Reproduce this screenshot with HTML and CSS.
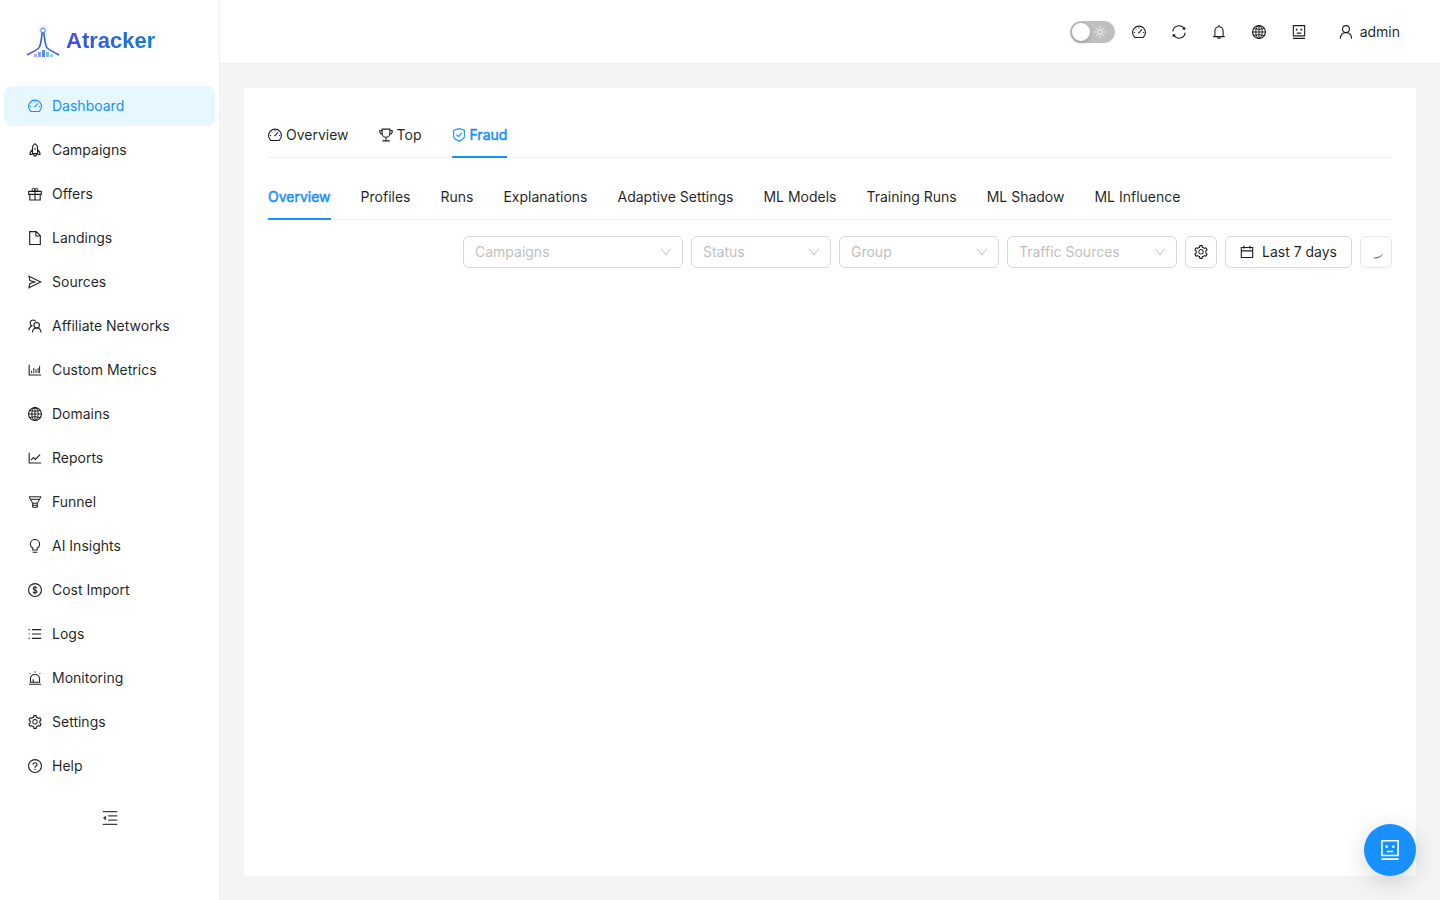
FILE: index.html
```html
<!DOCTYPE html>
<html lang="en">
<head>
    <meta charset="UTF-8">
    <meta name="viewport" content="width=device-width, initial-scale=1.0">
    <title>Atracker</title>
    <link rel="stylesheet" href="styles.css">
</head>
<body>
    <!-- Icon sprite -->
    <svg class="sprite" aria-hidden="true">
        <symbol id="i-dashboard" viewBox="64 64 896 896">
            <path d="M236 850A412 412 0 1 1 788 850Q776 860 760 860H264Q248 860 236 850Z"/>
            <path d="M512 210v80M275 305l50 50M180 545h80M764 545h80" stroke-width="60"/>
            <path d="M705 350L555 505"/>
            <circle cx="512" cy="548" r="36" stroke-width="56"/>
        </symbol>
        <symbol id="i-rocket" viewBox="64 64 896 896">
            <path d="M350 740V330Q370 180 512 105Q654 180 674 330V740Z"/>
            <path d="M350 520Q190 600 190 800H350M674 520Q834 600 834 800H674M410 740Q410 870 512 915Q614 870 614 740"/>
            <circle cx="512" cy="440" r="36" stroke-width="50"/>
        </symbol>
        <symbol id="i-gift" viewBox="64 64 896 896">
            <path d="M110 346H914V538H110ZM180 538V896H844V538M512 346V896"/>
            <path d="M512 340H400A95 95 0 1 1 512 235ZM512 340H624A95 95 0 1 0 512 235Z" stroke-width="64"/>
        </symbol>
        <symbol id="i-file" viewBox="64 64 896 896">
            <path d="M172 100H590L852 362V924H172ZM570 110V382H842"/>
        </symbol>
        <symbol id="i-send" viewBox="64 64 896 896">
            <path d="M125 150L885 512L125 874L185 600L490 512L185 424Z"/>
        </symbol>
        <symbol id="i-team" viewBox="64 64 896 896">
            <circle cx="620" cy="465" r="175"/>
            <path d="M350 930Q360 640 620 640Q880 640 900 930M120 790Q125 590 305 510Q195 450 205 290Q240 135 400 130Q520 130 565 225"/>
        </symbol>
        <symbol id="i-bars" viewBox="64 64 896 896">
            <path d="M140 170V835H900"/>
            <path d="M292 714V560M432 714V380M572 714V450M712 714V380M805 714V240" stroke-width="60"/>
        </symbol>
        <symbol id="i-globe" viewBox="64 64 896 896">
            <circle cx="512" cy="512" r="412"/>
            <ellipse cx="512" cy="512" rx="205" ry="412" stroke-width="60"/>
            <path d="M512 100V924M100 512H924M175 290Q512 390 849 290M175 734Q512 634 849 734" stroke-width="60"/>
        </symbol>
        <symbol id="i-line" viewBox="64 64 896 896">
            <path d="M140 170V835H900M260 650L410 480L535 600L835 300"/>
        </symbol>
        <symbol id="i-funnel" viewBox="64 64 896 896">
            <path d="M130 180H894L660 590V850H364V590ZM220 340H804M350 590H674M364 720H660" stroke-width="64"/>
        </symbol>
        <symbol id="i-bulb" viewBox="64 64 896 896">
            <path d="M370 770V640Q215 550 215 395A297 297 0 0 1 809 395Q809 550 654 640V770ZM360 915H664"/>
        </symbol>
        <symbol id="i-dollar" viewBox="64 64 896 896">
            <circle cx="512" cy="512" r="412"/>
            <path d="M635 405Q610 320 512 320Q395 320 395 410Q395 485 512 507Q635 530 635 615Q635 710 512 710Q400 710 385 615M512 250V780" stroke-width="66"/>
        </symbol>
        <symbol id="i-list" viewBox="64 64 896 896">
            <path d="M320 230H912M320 512H912M320 794H912M104 230H176M104 512H176M104 794H176"/>
        </symbol>
        <symbol id="i-alert" viewBox="64 64 896 896">
            <path d="M220 780V560A292 272 0 0 1 804 560V780ZM130 915H894M400 780V590"/>
            <path d="M512 80V175M165 190L230 255M859 190L794 255" stroke-width="60"/>
        </symbol>
        <symbol id="i-setting" viewBox="64 64 896 896">
            <path class="solid" d="M924.8 625.7l-65.5-56c3.1-19 4.7-38.4 4.7-57.8s-1.6-38.8-4.7-57.8l65.5-56a32.03 32.03 0 009.3-35.2l-.9-2.6a443.74 443.74 0 00-79.7-137.9l-1.8-2.1a32.12 32.12 0 00-35.1-9.5l-81.3 28.9c-30-24.6-63.5-44-99.7-57.6l-15.7-85a32.05 32.05 0 00-25.8-25.7l-2.7-.5c-52.1-9.4-106.9-9.4-159 0l-2.7.5a32.05 32.05 0 00-25.8 25.7l-15.8 85.4a351.86 351.86 0 00-99 57.4l-81.9-29.1a32 32 0 00-35.1 9.5l-1.8 2.1a446.02 446.02 0 00-79.7 137.9l-.9 2.6c-4.5 12.5-.8 26.5 9.3 35.2l66.3 56.6c-3.1 18.8-4.6 38-4.6 57.1 0 19.2 1.5 38.4 4.6 57.1L99 625.5a32.03 32.03 0 00-9.3 35.2l.9 2.6c18.1 50.4 44.9 96.9 79.7 137.9l1.8 2.1a32.12 32.12 0 0035.1 9.5l81.9-29.1c29.8 24.5 63.1 43.9 99 57.4l15.8 85.4a32.05 32.05 0 0025.8 25.7l2.7.5a449.4 449.4 0 00159 0l2.7-.5a32.05 32.05 0 0025.8-25.7l15.7-85a350 350 0 0099.7-57.6l81.3 28.9a32 32 0 0035.1-9.5l1.8-2.1c34.8-41.1 61.6-87.5 79.7-137.9l.9-2.6c4.5-12.3.8-26.3-9.3-35zM788.3 465.9c2.5 15.1 3.8 30.6 3.8 46.1s-1.3 31-3.8 46.1l-6.6 40.1 74.7 63.9a370.03 370.03 0 01-42.6 73.6L721 702.8l-31.4 25.8c-23.9 19.6-50.5 35-79.3 45.8l-38.1 14.3-17.9 97a377.5 377.5 0 01-85 0l-17.9-97.2-37.8-14.5c-28.5-10.8-55-26.2-78.7-45.7l-31.4-25.9-93.4 33.2c-17-22.9-31.2-47.6-42.6-73.6l75.5-64.5-6.5-40c-2.4-14.9-3.7-30.3-3.7-45.5 0-15.3 1.2-30.6 3.7-45.5l6.5-40-75.5-64.5c11.3-26.1 25.6-50.7 42.6-73.6l93.4 33.2 31.4-25.9c23.7-19.5 50.2-34.9 78.7-45.7l37.9-14.3 17.9-97.2c28.1-3.2 56.8-3.2 85 0l17.9 97 38.1 14.3c28.7 10.8 55.4 26.2 79.3 45.8l31.4 25.8 92.8-32.9c17 22.9 31.2 47.6 42.6 73.6L781.8 426l6.5 39.9zM512 326c-97.2 0-176 78.8-176 176s78.8 176 176 176 176-78.8 176-176-78.8-176-176-176zm79.2 255.2A111.6 111.6 0 01512 614c-29.9 0-58-11.7-79.2-32.8A111.6 111.6 0 01400 502c0-29.9 11.7-58 32.8-79.2C454 401.6 482.1 390 512 390c29.9 0 58 11.6 79.2 32.8A111.6 111.6 0 01624 502c0 29.9-11.7 58-32.8 79.2z"/>
        </symbol>
        <symbol id="i-help" viewBox="64 64 896 896">
            <circle cx="512" cy="512" r="412"/>
            <path d="M384 425Q384 300 512 300Q640 300 640 415Q640 490 570 520Q512 545 512 620M512 690V765"/>
        </symbol>
        <symbol id="i-fold" viewBox="64 64 896 896">
            <path d="M104 160H920M408 390H920M408 634H920M104 864H920"/>
            <path class="solid" d="M115 512L292 375V649Z"/>
        </symbol>
        <symbol id="i-sync" viewBox="64 64 896 896">
            <path d="M115 470A395 395 0 0 1 840 300M909 554A395 395 0 0 1 184 724"/>
            <path class="solid" d="M910 170V380L710 340ZM114 854V644L314 684Z"/>
        </symbol>
        <symbol id="i-bell" viewBox="64 64 896 896">
            <path d="M250 800V440A262 262 0 0 1 774 440V800M140 805H884M512 70V170M415 860Q440 915 512 915Q584 915 609 860"/>
        </symbol>
        <symbol id="i-robot" viewBox="64 64 896 896">
            <path d="M150 100H874V760H150ZM130 920H894M372 580H652"/>
            <path class="solid" d="M310 310H414V414H310ZM610 310H714V414H610Z"/>
        </symbol>
        <symbol id="i-user" viewBox="64 64 896 896">
            <circle cx="512" cy="325" r="220"/>
            <path d="M150 935Q170 550 512 545Q854 550 874 935"/>
        </symbol>
        <symbol id="i-sun" viewBox="64 64 896 896">
            <circle cx="512" cy="512" r="190"/>
            <path d="M512 80V190M512 834V944M80 512H190M834 512H944M207 207L284 284M740 740L817 817M207 817L284 740M740 284L817 207"/>
        </symbol>
        <symbol id="i-trophy" viewBox="64 64 896 896">
            <path d="M265 135H759V410A247 247 0 0 1 265 410ZM265 220H115V330Q130 450 280 475M759 220H909V330Q894 450 744 475M512 660V875M270 885H754"/>
        </symbol>
        <symbol id="i-shield" viewBox="64 64 896 896">
            <path d="M512 105L854 200V610Q854 690 780 750L512 915L244 750Q170 690 170 610V200Z"/>
            <path d="M345 490L475 620L690 370"/>
        </symbol>
        <symbol id="i-calendar" viewBox="64 64 896 896">
            <path d="M148 220H876V860H148ZM148 440H876M320 110V300M704 110V300"/>
        </symbol>
        <symbol id="i-down" viewBox="64 64 896 896">
            <path d="M160 270L512 750L864 270"/>
        </symbol>
        <symbol id="i-spin" viewBox="64 64 896 896">
            <path class="solid" d="M960 570Q900 690 780 770Q600 890 360 850Q350 900 390 910Q620 970 810 820Q950 700 960 570Z"/>
        </symbol>
    </svg>

    <div class="layout">
        <aside class="sidebar">
            <a class="logo" href="#">
                <svg class="logo-mark" viewBox="0 0 34 34" aria-hidden="true">
                    <defs>
                        <linearGradient id="mark" x1="0" y1="0" x2="1" y2="0">
                            <stop offset="0" stop-color="#5b3fe8"/>
                            <stop offset=".5" stop-color="#2563eb"/>
                            <stop offset="1" stop-color="#3550d8"/>
                        </linearGradient>
                        <radialGradient id="glow">
                            <stop offset="0" stop-color="#6b7cf0" stop-opacity=".3"/>
                            <stop offset="1" stop-color="#6b7cf0" stop-opacity="0"/>
                        </radialGradient>
                    </defs>
                    <circle cx="17" cy="6" r="6" fill="url(#glow)"/>
                    <path d="M1 31C6 28 12 26 13.500 23C15 19 15.500 14 16.200 8.500M33 31C28 28 22 26 20.500 23C19 19 18.500 14 17.800 8.500" fill="none" stroke="url(#mark)" stroke-width="1.600"/>
                    <circle cx="17" cy="6.500" r="2.300" fill="#fff" stroke="#4a80e0" stroke-width="1"/>
                    <path d="M8 30h3v3H8z" fill="#b5a8f5"/>
                    <path d="M12 28h3v5h-3z" fill="#8b9cf2"/>
                    <path d="M16 26h3v7h-3z" fill="#5b86e8"/>
                    <path d="M20 28h3v5h-3z" fill="#7bbcd8"/>
                    <path d="M24 30h3v3h-3z" fill="#93d6da"/>
                </svg>
                <span class="logo-text">Atracker</span>
            </a>

            <nav class="menu">
                <a class="menu-item active" href="#"><svg class="icon"><use href="#i-dashboard"/></svg>Dashboard</a>
                <a class="menu-item" href="#"><svg class="icon"><use href="#i-rocket"/></svg>Campaigns</a>
                <a class="menu-item" href="#"><svg class="icon"><use href="#i-gift"/></svg>Offers</a>
                <a class="menu-item" href="#"><svg class="icon"><use href="#i-file"/></svg>Landings</a>
                <a class="menu-item" href="#"><svg class="icon"><use href="#i-send"/></svg>Sources</a>
                <a class="menu-item" href="#"><svg class="icon"><use href="#i-team"/></svg>Affiliate Networks</a>
                <a class="menu-item" href="#"><svg class="icon"><use href="#i-bars"/></svg>Custom Metrics</a>
                <a class="menu-item" href="#"><svg class="icon"><use href="#i-globe"/></svg>Domains</a>
                <a class="menu-item" href="#"><svg class="icon"><use href="#i-line"/></svg>Reports</a>
                <a class="menu-item" href="#"><svg class="icon"><use href="#i-funnel"/></svg>Funnel</a>
                <a class="menu-item" href="#"><svg class="icon"><use href="#i-bulb"/></svg>AI Insights</a>
                <a class="menu-item" href="#"><svg class="icon"><use href="#i-dollar"/></svg>Cost Import</a>
                <a class="menu-item" href="#"><svg class="icon"><use href="#i-list"/></svg>Logs</a>
                <a class="menu-item" href="#"><svg class="icon"><use href="#i-alert"/></svg>Monitoring</a>
                <a class="menu-item" href="#"><svg class="icon"><use href="#i-setting"/></svg>Settings</a>
                <a class="menu-item" href="#"><svg class="icon"><use href="#i-help"/></svg>Help</a>
            </nav>

            <button class="icon-btn collapse" aria-label="Collapse menu"><svg class="icon"><use href="#i-fold"/></svg></button>
        </aside>

        <div class="main">
            <header class="header">
                <label class="switch">
                    <input type="checkbox" aria-label="Dark theme">
                    <svg class="icon"><use href="#i-sun"/></svg>
                </label>
                <button class="icon-btn" aria-label="Dashboard"><svg class="icon"><use href="#i-dashboard"/></svg></button>
                <button class="icon-btn" aria-label="Refresh"><svg class="icon"><use href="#i-sync"/></svg></button>
                <button class="icon-btn" aria-label="Notifications"><svg class="icon"><use href="#i-bell"/></svg></button>
                <button class="icon-btn" aria-label="Language"><svg class="icon"><use href="#i-globe"/></svg></button>
                <button class="icon-btn" aria-label="Assistant"><svg class="icon"><use href="#i-robot"/></svg></button>
                <button class="user-btn"><svg class="icon"><use href="#i-user"/></svg>admin</button>
            </header>

            <main class="card">
                <div class="tabs" role="tablist">
                    <button class="tab" role="tab"><svg class="icon"><use href="#i-dashboard"/></svg>Overview</button>
                    <button class="tab" role="tab"><svg class="icon"><use href="#i-trophy"/></svg>Top</button>
                    <button class="tab active" role="tab" aria-selected="true"><svg class="icon"><use href="#i-shield"/></svg>Fraud</button>
                </div>

                <div class="tabs" role="tablist">
                    <button class="tab active" role="tab" aria-selected="true">Overview</button>
                    <button class="tab" role="tab">Profiles</button>
                    <button class="tab" role="tab">Runs</button>
                    <button class="tab" role="tab">Explanations</button>
                    <button class="tab" role="tab">Adaptive Settings</button>
                    <button class="tab" role="tab">ML Models</button>
                    <button class="tab" role="tab">Training Runs</button>
                    <button class="tab" role="tab">ML Shadow</button>
                    <button class="tab" role="tab">ML Influence</button>
                </div>

                <!-- Filters -->
                <div class="filters">
                    <div class="select campaigns">
                        <select aria-label="Campaigns"><option>Campaigns</option></select>
                        <svg class="icon"><use href="#i-down"/></svg>
                    </div>
                    <div class="select status">
                        <select aria-label="Status"><option>Status</option></select>
                        <svg class="icon"><use href="#i-down"/></svg>
                    </div>
                    <div class="select group">
                        <select aria-label="Group"><option>Group</option></select>
                        <svg class="icon"><use href="#i-down"/></svg>
                    </div>
                    <div class="select sources">
                        <select aria-label="Traffic Sources"><option>Traffic Sources</option></select>
                        <svg class="icon"><use href="#i-down"/></svg>
                    </div>
                    <button class="btn square" aria-label="Filter settings"><svg class="icon"><use href="#i-setting"/></svg></button>
                    <button class="btn"><svg class="icon"><use href="#i-calendar"/></svg>Last 7 days</button>
                    <button class="btn square loading" aria-label="Loading"><svg class="icon"><use href="#i-spin"/></svg></button>
                </div>
            </main>
        </div>
    </div>

    <button class="fab" aria-label="Open assistant"><svg class="icon"><use href="#i-robot"/></svg></button>
</body>
</html>
```
FILE: styles.css
```css
:root {
    --primary: #1890ff;
    --primary-bg: #e6f7ff;
    --text: rgba(0, 0, 0, 0.88);
    --placeholder: #bfbfbf;
    --border: #d9d9d9;
    --split: #f0f0f0;
    --page-bg: #f4f4f4;
}

* {
    box-sizing: border-box;
}

body {
    margin: 0;
    font-family: Inter, sans-serif;
    font-size: 14px;
    line-height: 22px;
    color: var(--text);
    background: var(--page-bg);
}

a {
    color: inherit;
    text-decoration: none;
}

button,
select {
    font: inherit;
    color: inherit;
    cursor: pointer;
}

button {
    display: flex;
    align-items: center;
    justify-content: center;
    padding: 0;
    border: none;
    background: none;
}

.sprite {
    display: none;
}

.icon {
    width: 14px;
    height: 14px;
    flex-shrink: 0;
    fill: none;
    stroke: currentColor;
    stroke-width: 72;
}

.solid {
    fill: currentColor;
    stroke: none;
}

.layout {
    display: flex;
    min-height: 100vh;
}

/* Sidebar */
.sidebar {
    width: 220px;
    flex-shrink: 0;
    background: #fff;
    border-right: 1px solid var(--split);
}

.logo {
    display: flex;
    align-items: center;
    gap: 6px;
    height: 82px;
    padding-left: 26px;
}

.logo-mark {
    width: 34px;
    height: 34px;
}

.logo-text {
    font-family: "Liberation Sans", Arial, sans-serif;
    font-size: 22px;
    font-weight: 700;
    line-height: 32px;
    color: transparent;
    background: linear-gradient(135deg, #4f46e5, #2563eb 50%, #0891b2);
    background-clip: text;
    -webkit-background-clip: text;
}

.menu {
    display: flex;
    flex-direction: column;
    gap: 4px;
    padding: 4px;
}

.menu-item {
    display: flex;
    align-items: center;
    gap: 10px;
    height: 40px;
    padding: 0 24px;
    border-radius: 8px;
}

.menu-item.active {
    color: var(--primary);
    background: var(--primary-bg);
}

.collapse {
    margin: 12px auto;
    color: rgba(0, 0, 0, 0.75);
}

.collapse .icon {
    width: 16px;
    height: 16px;
}

/* Header */
.main {
    flex: 1;
    min-width: 0;
    display: flex;
    flex-direction: column;
}

.header {
    display: flex;
    align-items: center;
    justify-content: flex-end;
    gap: 8px;
    height: 64px;
    padding: 0 24px;
    background: #fff;
    border-bottom: 1px solid var(--split);
}

.icon-btn {
    width: 32px;
    height: 32px;
}

.user-btn {
    gap: 7px;
    height: 32px;
    padding: 0 16px;
}

.switch {
    display: flex;
    align-items: center;
    width: 45px;
    height: 22px;
    padding: 2px;
    gap: 4px;
    border-radius: 11px;
    color: #fff;
    background: #bfbfbf;
    cursor: pointer;
}

.switch input {
    appearance: none;
    width: 18px;
    height: 18px;
    margin: 0;
    border-radius: 50%;
    background: #fff;
    box-shadow: 0 2px 4px rgba(0, 35, 11, 0.2);
}

.switch .icon {
    width: 12px;
    height: 12px;
}

/* Content */
.card {
    flex: 1;
    margin: 24px;
    padding: 24px;
    background: #fff;
}

.tabs {
    display: flex;
    gap: 30px;
    margin-bottom: 16px;
    box-shadow: inset 0 -1px var(--split);
}

.tab {
    gap: 4px;
    padding: 12px 0;
    white-space: nowrap;
}

.tab.active {
    color: var(--primary);
    box-shadow: inset 0 -2px var(--primary);
    -webkit-text-stroke: 0.5px currentColor;
}

.filters {
    display: flex;
    justify-content: flex-end;
    gap: 8px;
}

.select {
    display: grid;
    align-items: center;
}

.select select,
.select .icon {
    grid-area: 1 / 1;
}

.select select {
    appearance: none;
    width: 100%;
    height: 32px;
    padding: 0 30px 0 11px;
    border: 1px solid var(--border);
    border-radius: 6px;
    color: var(--placeholder);
    background: #fff;
}

.select .icon {
    justify-self: end;
    width: 12px;
    height: 12px;
    margin-right: 11px;
    color: var(--placeholder);
    pointer-events: none;
}

.campaigns {
    width: 220px;
}

.status {
    width: 140px;
}

.group {
    width: 160px;
}

.sources {
    width: 170px;
}

.btn {
    gap: 8px;
    height: 32px;
    padding: 0 14px;
    border: 1px solid var(--border);
    border-radius: 6px;
    background: #fff;
    box-shadow: 0 2px 0 rgba(0, 0, 0, 0.02);
}

.btn.square {
    width: 32px;
    padding: 0;
}

.btn.loading {
    opacity: 0.65;
}

.fab {
    position: fixed;
    right: 24px;
    bottom: 24px;
    width: 52px;
    height: 52px;
    border-radius: 50%;
    color: #fff;
    background: var(--primary);
    box-shadow: 0 6px 24px rgba(0, 0, 0, 0.16);
}

.fab .icon {
    width: 20px;
    height: 20px;
}
```
